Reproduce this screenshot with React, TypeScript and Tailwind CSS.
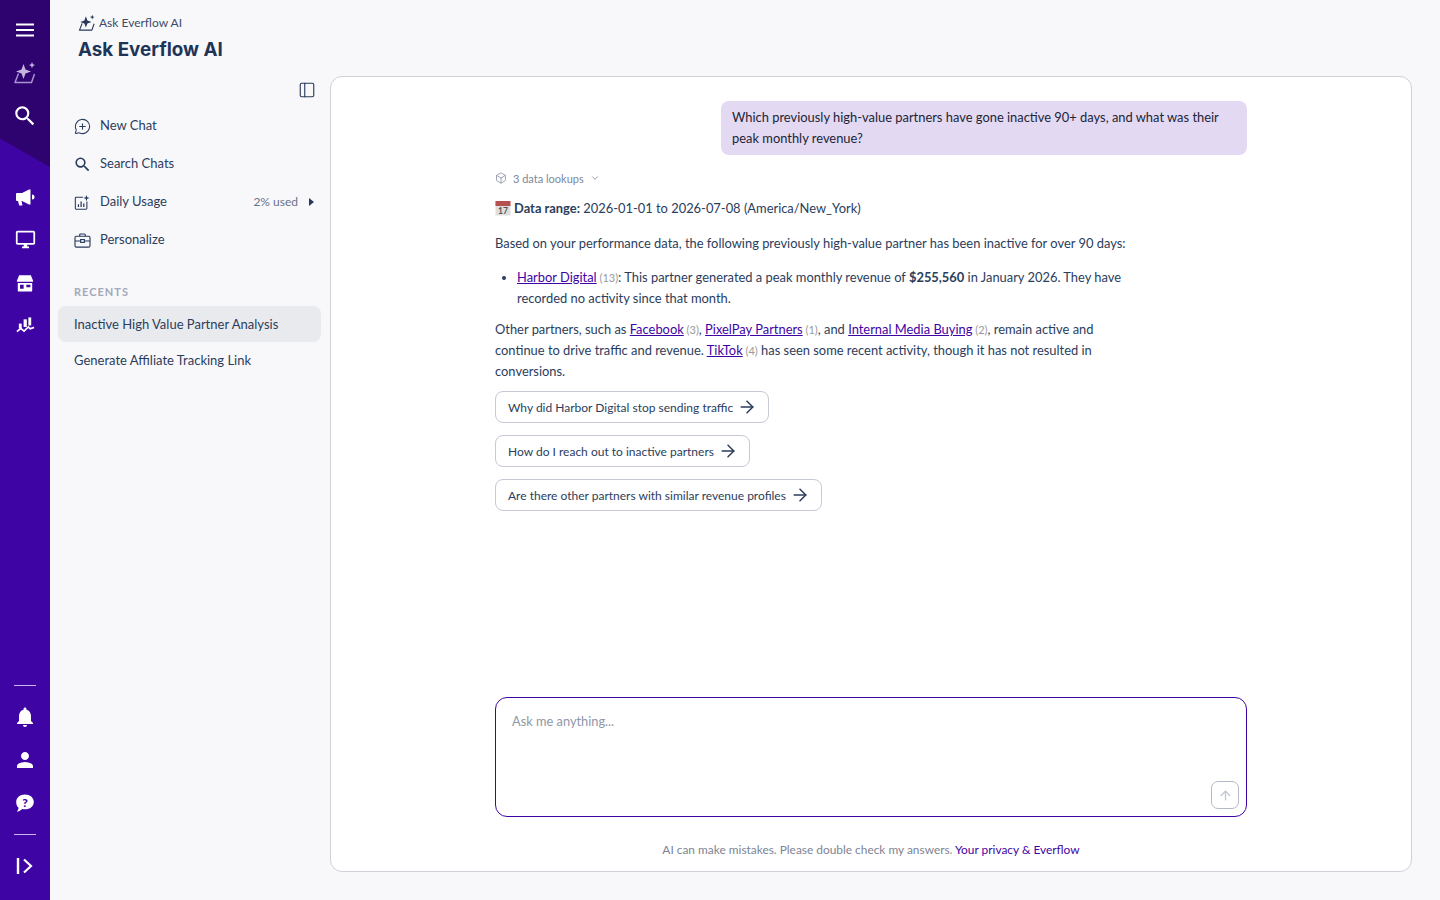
import { ArrowRight, ArrowUp, ChevronDown, Box, PanelLeft, MessageCirclePlus } from "lucide-react";
import { MdNotifications, MdOutlineDesktopWindows, MdPerson, MdSearch } from "react-icons/md";

const Spark = ({ className, star }: { className: string; star?: string }) => (
  <svg viewBox="0 0 24 24" fill="none" className={className}>
    <path d="M5.500 12.500 2 21.500h16.500L21.500 13" stroke="currentColor" strokeWidth="1.500" strokeLinejoin="round" />
    <path d="M10.500 3l2 5.500 5.500 2-5.500 2-2 5.500-2-5.500-5.500-2 5.500-2z" fill={star ?? "currentColor"} />
    <path d="M19 1l.9 2.200 2.200.9-2.200.9-.9 2.200-.9-2.200-2.200-.9 2.200-.9z" fill={star ?? "currentColor"} />
  </svg>
);

const UsageIcon = () => (
  <svg viewBox="0 0 18 18" fill="none" className="w-[16px] h-[17px] text-[#27395a]">
    <path d="M10 3H2.500A1 1 0 0 0 1.500 4v11.500a1 1 0 0 0 1 1h11a1 1 0 0 0 1-1V8" stroke="currentColor" strokeWidth="1.200" />
    <path d="M5 14v-3M8 14V8M11 14v-4" stroke="currentColor" strokeWidth="1.400" />
    <path d="M14 .5l.9 2.600 2.600.9-2.600.9L14 7.500l-.9-2.600-2.600-.9 2.600-.9z" fill="currentColor" />
  </svg>
);

const CaseIcon = () => (
  <svg viewBox="0 0 18 16" fill="none" stroke="currentColor" strokeWidth="1.200" className="w-[17px] h-[15px] text-[#27395a]">
    <rect x="1" y="3.500" width="16" height="11.500" rx="1.500" />
    <path d="M6 3.500V2a1 1 0 0 1 1-1h4a1 1 0 0 1 1 1v1.500M1 8.500h6M11 8.500h6" />
    <rect x="7" y="7" width="4" height="3" />
  </svg>
);

const HornIcon = () => (
  <svg viewBox="0 0 20 20" fill="white" className="w-[20px] h-[20px]">
    <path d="M1 7a1 1 0 0 1 1-1h5l7-3.500h1.500v15H14L7 14H6.500l1 4.500H4.200L3 14H2a1 1 0 0 1-1-1z" />
    <path d="M17 7.500a2.500 2.500 0 0 1 0 5z" />
  </svg>
);

const StoreIcon = () => (
  <svg viewBox="0 0 20 20" className="w-[18px] h-[18px]">
    <path fillRule="evenodd" fill="white" d="M3.500 1.500h13L19 7.500v1H1v-1zM2 10h16v8.500a1 1 0 0 1-1 1H3a1 1 0 0 1-1-1zM4.500 12v4.500h4V12zm7 0v2.800h4.500V12z" />
  </svg>
);

const GrowthIcon = () => (
  <svg viewBox="0 0 20 20" fill="white" className="w-[19px] h-[19px]">
    <rect x="3" y="8" width="3" height="5" />
    <rect x="8" y="3.500" width="3.400" height="8" />
    <rect x="13" y="1.500" width="3" height="8.500" />
    <path d="M1 16.500l4-3.500 3.500 3 4.500-4.500 2 2 4-1.500" fill="none" stroke="white" strokeWidth="1.800" />
  </svg>
);

const HelpBubble = () => (
  <svg viewBox="0 0 20 20" className="w-[20px] h-[20px]">
    <path d="M10 1.500c5 0 8.800 3.200 8.800 7.400s-3.800 7.400-8.800 7.400c-1 0-2-.1-2.900-.4C5.800 17.300 4 18.500 1.800 18.500c1-1 1.700-2.300 1.800-3.700C2 13.400 1.200 11.300 1.200 8.900 1.200 4.700 5 1.500 10 1.500z" fill="white" />
    <text x="10" y="13.500" textAnchor="middle" fontSize="12" fontWeight="900" fill="#3f04a4" fontFamily="Lato, sans-serif">?</text>
  </svg>
);

const CalendarEmoji = () => (
  <svg viewBox="0 0 16 16" className="w-[16px] h-[16px] inline-block align-[-3px] mr-[3px]">
    <rect x="0.500" y="1" width="15" height="14.500" fill="#dfdfdf" />
    <rect x="0.500" y="1" width="15" height="5" fill="#b5524f" />
    <text x="8" y="14" textAnchor="middle" fontSize="8.500" fontWeight="700" fill="#555" fontFamily="Lato, sans-serif">17</text>
  </svg>
);

const railTop = [
  <svg key="m" viewBox="0 0 18 14" stroke="white" strokeWidth="2" className="w-[18px] h-[14px]">
    <path d="M0 1.500h18M0 7h18M0 12.500h18" />
  </svg>,
  <Spark key="s" className="w-[24px] h-[24px] text-[#a892cf]" star="#c3b4e0" />,
  <MdSearch key="q" className="w-[26px] h-[26px] text-white" />,
];
const railMid = [
  <HornIcon key="c" />,
  <MdOutlineDesktopWindows key="d" className="w-[21px] h-[21px] text-white" />,
  <StoreIcon key="st" />,
  <GrowthIcon key="g" />,
];

const Partner = ({ name, n }: { name: string; n: number }) => (
  <>
    <a href="#" className="text-[#3f04a4] underline">{name}</a>
    <span className="text-[11px] leading-none text-[#9a9a9a]"> ({n})</span>
  </>
);

const suggestions = [
  "Why did Harbor Digital stop sending traffic",
  "How do I reach out to inactive partners",
  "Are there other partners with similar revenue profiles",
];

const navRow = "flex items-center h-[38px] pl-[24px] text-[13px] text-[#2b3d5c]";

export default function App() {
  return (
    <div className="flex h-[900px] bg-[#f8f8fb] text-[#27395a] font-['Lato',sans-serif] overflow-hidden">
      <aside className="relative w-[50px] shrink-0 bg-[#3f04a4] flex flex-col items-center">
        <div className="absolute top-0 left-0 w-full h-[167px] bg-[#2e0370] [clip-path:polygon(0_0,100%_0,100%_100%,0_83%)]" />
        <div className="relative flex flex-col items-center w-full pt-[8px]">
          {railTop.map((icon, i) => (
            <div key={i} className="h-[43px] flex items-center justify-center">{icon}</div>
          ))}
        </div>
        <div className="relative flex flex-col items-center w-full mt-[38px]">
          {railMid.map((icon, i) => (
            <div key={i} className="h-[43px] flex items-center justify-center">{icon}</div>
          ))}
        </div>
        <div className="relative mt-auto flex flex-col items-center w-full pb-[14px]">
          <div className="w-[22px] h-px bg-[#c9b8e8] mb-[9px]" />
          <div className="h-[43px] flex items-center justify-center"><MdNotifications className="w-[24px] h-[24px] text-white" /></div>
          <div className="h-[43px] flex items-center justify-center"><MdPerson className="w-[24px] h-[24px] text-white" /></div>
          <div className="h-[43px] flex items-center justify-center"><HelpBubble /></div>
          <div className="w-[22px] h-px bg-[#c9b8e8] mt-[10px] mb-[10px]" />
          <div className="h-[41px] flex items-center justify-center">
            <svg viewBox="0 0 18 18" fill="none" stroke="white" className="w-[18px] h-[18px]">
              <path d="M2 1v16" strokeWidth="2.400" />
              <path d="M8 2.500 15 9l-7 6.500" strokeWidth="2.200" />
            </svg>
          </div>
        </div>
      </aside>

      <div className="flex-1 flex flex-col min-w-0">
        <header className="h-[76px] shrink-0 pl-[28px] pt-[14px]">
          <div className="flex items-center gap-[3px] text-[12px] text-[#3c4b68] leading-[18px]">
            <Spark className="w-[18px] h-[18px] text-[#27395a]" />
            Ask Everflow AI
          </div>
          <h1 className="text-[18.800px] leading-[26px] font-bold text-[#1f3557] mt-[5px] font-['Inter',sans-serif]">Ask Everflow AI</h1>
        </header>

        <div className="flex-1 flex pr-[28px] pb-[28px] min-h-0">
          <nav className="w-[280px] shrink-0 flex flex-col">
            <div className="flex justify-end pr-[14px] pt-[5px] h-[31px]">
              <PanelLeft className="w-[18px] h-[18px] text-[#27395a]" strokeWidth={1.5} />
            </div>
            <div className={navRow}>
              <span className="w-[26px]"><MessageCirclePlus className="w-[17px] h-[17px]" strokeWidth={1.5} /></span>New Chat
            </div>
            <div className={navRow}>
              <span className="w-[26px]"><MdSearch className="w-[19px] h-[19px] -ml-[1px]" /></span>Search Chats
            </div>
            <div className={navRow}>
              <span className="w-[26px]"><UsageIcon /></span>Daily Usage
              <span className="ml-auto text-[12px] text-[#68738a]">2% used</span>
              <span className="ml-[11px] mr-[16px] w-0 h-0 border-y-[4px] border-y-transparent border-l-[5px] border-l-[#27395a]" />
            </div>
            <div className={navRow}>
              <span className="w-[26px]"><CaseIcon /></span>Personalize
            </div>
            <div className="pl-[24px] mt-[25px] text-[11px] leading-[16px] font-bold tracking-[1px] text-[#a3a9b8]">RECENTS</div>
            <div className="ml-[8px] mr-[9px] mt-[6px] h-[36px] pl-[16px] pt-[2px] flex items-center rounded-[8px] bg-[#e9eaee] text-[13px] text-[#2b3d5c]">
              Inactive High Value Partner Analysis
            </div>
            <div className="ml-[8px] mr-[9px] h-[36px] pl-[16px] pt-[2px] flex items-center text-[13px] text-[#2b3d5c]">
              Generate Affiliate Tracking Link
            </div>
          </nav>

          <main className="flex-1 min-w-0 bg-white border border-[#cfd1d9] rounded-[12px] flex flex-col items-center">
            <div className="w-[752px] flex-1 pt-[24px] text-[12.900px] leading-[21px] text-[#2b3d5c]">
              <div className="flex justify-end">
                <div className="w-[526px] bg-[#e3d9f3] rounded-[8px] px-[11px] py-[6px] text-[#1c2536]">
                  Which previously high-value partners have gone inactive 90+ days, and what was their peak monthly revenue?
                </div>
              </div>
              <div className="flex items-center mt-[15px] h-[16px] text-[11px] text-[#7d879c]">
                <Box className="w-[12px] h-[12px] mr-[6px]" strokeWidth={1.5} />
                3 data lookups
                <ChevronDown className="w-[10px] h-[10px] ml-[6px]" strokeWidth={2} />
              </div>
              <p className="mt-[12px]">
                <CalendarEmoji /><strong>Data range:</strong> 2026-01-01 to 2026-07-08 (America/New_York)
              </p>
              <p className="mt-[14px] max-w-[640px]">
                Based on your performance data, the following previously high-value partner has been inactive for over 90 days:
              </p>
              <ul className="mt-[13px] pl-[22px] list-disc max-w-[640px]">
                <li>
                  <Partner name="Harbor Digital" n={13} />: This partner generated a peak monthly revenue of <strong>$255,560</strong> in January 2026. They have recorded no activity since that month.
                </li>
              </ul>
              <p className="mt-[10px] max-w-[640px]">
                Other partners, such as <Partner name="Facebook" n={3} />, <Partner name="PixelPay Partners" n={1} />, and <Partner name="Internal Media Buying" n={2} />, remain active and continue to drive traffic and revenue. <Partner name="TikTok" n={4} /> has seen some recent activity, though it has not resulted in conversions.
              </p>
              <div className="mt-[9px] flex flex-col items-start gap-[12px]">
                {suggestions.map((s) => (
                  <button key={s} className="h-[32px] pl-[12px] pr-[11px] flex items-center gap-[4px] rounded-[8px] border border-[#c6c9d6] text-[12px] text-[#2b3d5c]">
                    {s}
                    <ArrowRight className="w-[20px] h-[20px] text-[#2b3d5c]" strokeWidth={1.8} />
                  </button>
                ))}
              </div>
            </div>

            <div className="relative w-[752px] h-[120px] shrink-0">
              <textarea
                placeholder="Ask me anything..."
                className="w-full h-full resize-none rounded-[12px] border border-[#3f04a4] px-[16px] py-[13px] text-[12.800px] leading-[21px] outline-none placeholder:text-[#8f96a6]"
              />
              <button className="absolute right-[8px] bottom-[8px] w-[28px] h-[28px] rounded-[7px] border border-[#b4bac8] flex items-center justify-center">
                <ArrowUp className="w-[15px] h-[15px] text-[#c0c5d0]" strokeWidth={2} />
              </button>
            </div>
            <p className="h-[54px] shrink-0 pt-[24px] text-[11.900px] leading-[18px] text-[#7d8494]">
              AI can make mistakes. Please double check my answers. <a href="#" className="text-[#3f04a4]">Your privacy &amp; Everflow</a>
            </p>
          </main>
        </div>
      </div>
    </div>
  );
}
